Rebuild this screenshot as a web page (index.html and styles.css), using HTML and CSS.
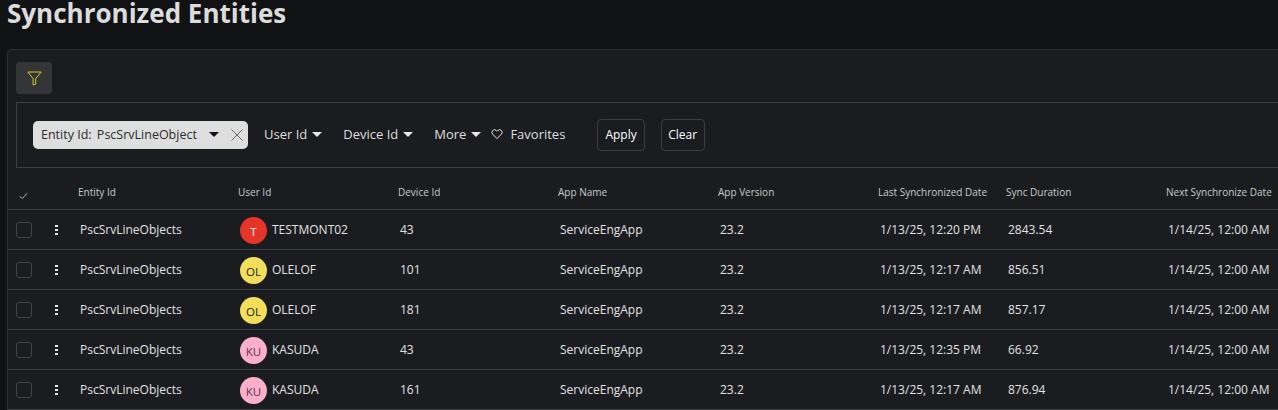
FILE: index.html
```html
<!DOCTYPE html>
<html lang="en">
<head>
<meta charset="utf-8">
<title>Synchronized Entities</title>
<link rel="stylesheet" href="styles.css">
</head>
<body>
<h1 class="title">Synchronized Entities</h1>
<main class="card">
  <button class="filter-btn" aria-label="Filter">
    <svg width="15" height="15" viewBox="0 0 15 15" fill="none" stroke="#d9c92c" stroke-width="1"><path d="M.8 1h13.400L8.700 7.600v5.600l-2.600.7V7.600z"/></svg>
  </button>
  <section class="filters">
    <div class="chip">
      <span class="chip-label">Entity Id: <span class="chip-value">PscSrvLineObject</span></span>
      <span class="caret caret-dark"></span>
      <svg class="chip-x" width="12" height="12" viewBox="0 0 12 12" stroke="#6b6e71" stroke-width="1"><path d="M.5.5l11 11M11.500.5l-11 11"/></svg>
    </div>
    <div class="drop d-user">User Id<span class="caret"></span></div>
    <div class="drop d-device">Device Id<span class="caret"></span></div>
    <div class="drop d-more">More<span class="caret"></span></div>
    <div class="fav">
      <svg width="12" height="12" viewBox="0 0 12 12" fill="none" stroke="#e4e4e4" stroke-width="1"><path d="M6 10.600 1.700 6.200a2.600 2.600 0 0 1 0-3.700 2.500 2.500 0 0 1 3.600 0l.7.8.7-.8a2.500 2.500 0 0 1 3.600 0 2.600 2.600 0 0 1 0 3.700z"/></svg>
      <span>Favorites</span>
    </div>
    <button class="btn btn-apply">Apply</button>
    <button class="btn btn-clear">Clear</button>
  </section>
  <div class="table">
    <div class="row head">
      <div class="c-check"><svg width="9" height="8" viewBox="0 0 9 8" fill="none" stroke="#b5b8ba" stroke-width="1"><path d="M.8 4.200 3.200 6.600 8.200 1.200"/></svg></div>
      <div>Entity Id</div><div>User Id</div><div>Device Id</div><div>App Name</div><div>App Version</div><div>Last Synchronized Date</div><div>Sync Duration</div><div>Next Synchronize Date</div>
    </div>
    <div class="row">
      <div class="c-tools"><span class="box"></span><span class="dots"><i></i><i></i><i></i></span></div>
      <div>PscSrvLineObjects</div>
      <div class="user"><span class="avatar red">T</span><span class="uname">TESTMONT02</span></div>
      <div>43</div><div>ServiceEngApp</div><div>23.2</div><div>1/13/25, 12:20 PM</div><div>2843.54</div><div>1/14/25, 12:00 AM</div>
    </div>
    <div class="row">
      <div class="c-tools"><span class="box"></span><span class="dots"><i></i><i></i><i></i></span></div>
      <div>PscSrvLineObjects</div>
      <div class="user"><span class="avatar yellow">OL</span><span class="uname">OLELOF</span></div>
      <div>101</div><div>ServiceEngApp</div><div>23.2</div><div>1/13/25, 12:17 AM</div><div>856.51</div><div>1/14/25, 12:00 AM</div>
    </div>
    <div class="row">
      <div class="c-tools"><span class="box"></span><span class="dots"><i></i><i></i><i></i></span></div>
      <div>PscSrvLineObjects</div>
      <div class="user"><span class="avatar yellow">OL</span><span class="uname">OLELOF</span></div>
      <div>181</div><div>ServiceEngApp</div><div>23.2</div><div>1/13/25, 12:17 AM</div><div>857.17</div><div>1/14/25, 12:00 AM</div>
    </div>
    <div class="row">
      <div class="c-tools"><span class="box"></span><span class="dots"><i></i><i></i><i></i></span></div>
      <div>PscSrvLineObjects</div>
      <div class="user"><span class="avatar pink">KU</span><span class="uname">KASUDA</span></div>
      <div>43</div><div>ServiceEngApp</div><div>23.2</div><div>1/13/25, 12:35 PM</div><div>66.92</div><div>1/14/25, 12:00 AM</div>
    </div>
    <div class="row">
      <div class="c-tools"><span class="box"></span><span class="dots"><i></i><i></i><i></i></span></div>
      <div>PscSrvLineObjects</div>
      <div class="user"><span class="avatar pink">KU</span><span class="uname">KASUDA</span></div>
      <div>161</div><div>ServiceEngApp</div><div>23.2</div><div>1/13/25, 12:17 AM</div><div>876.94</div><div>1/14/25, 12:00 AM</div>
    </div>
  </div>
</main>
</body>
</html>
```
FILE: styles.css
```css
* { box-sizing: border-box; }
html, body { height: 100%; }
body {
  margin: 0;
  overflow: hidden;
  background: #111213;
  color: #e6e6e6;
  font-family: "Open Sans", "Noto Sans", sans-serif;
  font-size: 12px;
}
.title {
  margin: 0;
  padding: 0 0 0 7px;
  height: 49px;
  font-size: 26px;
  font-weight: 700;
  line-height: 26px;
  color: #dcdcdc;
}
.card {
  margin-left: 7px;
  width: 1290px;
  height: 380px;
  background: #1a1c1f;
  border: 1px solid #2c3033;
  border-radius: 4px 0 0 0;
  padding-top: 12px;
}
.filter-btn {
  display: flex;
  align-items: center;
  justify-content: center;
  width: 36px;
  height: 32px;
  margin-left: 8px;
  padding: 0;
  background: #333537;
  border: 0;
  border-radius: 4px;
}
.filters {
  display: flex;
  align-items: center;
  height: 66px;
  margin: 8px 0 0 8px;
  padding: 0 0 0 16px;
  border: 1px solid #3a4045;
  border-right: 0;
  font-size: 13px;
  color: #dedede;
}
.chip {
  display: flex;
  align-items: center;
  width: 215px;
  height: 28px;
  padding-left: 8px;
  background: #dedede;
  color: #2c2c2c;
  border-radius: 5px;
  font-size: 12.5px;
}
.chip-label { white-space: nowrap; width: 168px; padding-bottom: 2px; }
.chip-value { margin-left: 2px; }
.chip .caret { margin-left: 0; margin-top: -2px; }
.chip-x { margin-left: 12px; }
.caret {
  display: inline-block;
  margin-left: 5px;
  width: 0;
  height: 0;
  border-left: 5px solid transparent;
  border-right: 5px solid transparent;
  border-top: 5px solid #e8e8e8;
  vertical-align: 2px;
}
.caret-dark { border-top-color: #111; }
.drop { white-space: nowrap; padding-bottom: 2px; }
.d-user { margin-left: 16px; }
.d-device { margin-left: 21px; }
.d-more { margin-left: 21px; }
.fav {
  display: flex;
  align-items: center;
  margin-left: 10px;
  gap: 7px;
  padding-bottom: 2px;
}
.btn {
  height: 32px;
  padding: 0 7px 2px;
  margin-left: 16px;
  background: transparent;
  border: 1px solid #3a3e42;
  border-radius: 4px;
  color: #fff;
  font: 500 12px "Open Sans", "Noto Sans", sans-serif;
}
.btn-apply { margin-left: 32px; }
.btn-clear { padding: 0 6.5px 2px; }
.row {
  display: grid;
  grid-template-columns: 70px 160px 160px 160px 160px 160px 128px 160px 160px;
  align-items: center;
  height: 40px;
  border-bottom: 1px solid #3c3f42;
  font-size: 12px;
  color: #e2e2e2;
}
.row > div:not(.c-check):not(.c-tools) { padding-left: 2px; white-space: nowrap; }
.head {
  height: 42px;
  padding-top: 6px;
  font-size: 10px;
  font-weight: 500;
  color: #c8cacc;
}
.head > div:not(.c-check):not(.c-tools) { padding-left: 0; }
.c-check { padding: 8px 0 0 11px; display: flex; align-items: center; }
.c-tools { display: flex; align-items: center; padding-left: 8px; }
.box {
  width: 16px;
  height: 16px;
  border: 1px solid #3f4448;
  border-radius: 3px;
}
.dots {
  display: flex;
  flex-direction: column;
  gap: 2px;
  margin-left: 23px;
}
.dots i {
  display: block;
  width: 3px;
  height: 2px;
  background: #e8e8e8;
}
.user { display: flex; align-items: center; }
.avatar {
  display: flex;
  align-items: center;
  justify-content: center;
  width: 27px;
  height: 27px;
  margin-top: 2px;
  padding-top: 1px;
  border-radius: 50%;
  font-size: 11.5px;
}
.red { background: #e53528; color: #fff; }
.yellow { background: #f3de5c; color: #222; }
.pink { background: #fbafc8; color: #5c3550; }
.uname { margin-left: 5px; }
```
